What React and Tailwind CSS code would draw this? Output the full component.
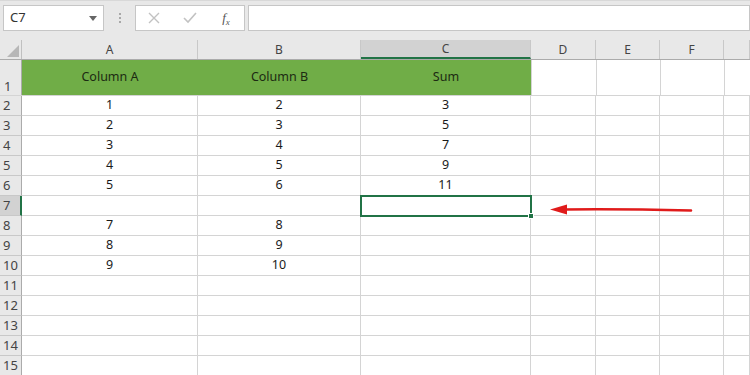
import { useState } from "react";

const cols = [
  { key: "A", w: "w-[176px]" },
  { key: "B", w: "w-[163px]" },
  { key: "C", w: "w-[170px]" },
  { key: "D", w: "w-[65px]" },
  { key: "E", w: "w-[64px]" },
  { key: "F", w: "w-[64px]" },
  { key: "G", w: "flex-1" },
];

// sheet contents, row 1 is the green title row
const data = {
  2: ["1", "2", "3"],
  3: ["2", "3", "5"],
  4: ["3", "4", "7"],
  5: ["4", "5", "9"],
  6: ["5", "6", "11"],
  7: ["", "", ""],
  8: ["7", "8", ""],
  9: ["8", "9", ""],
  10: ["9", "10", ""],
};

const rows = [2, 3, 4, 5, 6, 7, 8, 9, 10, 11, 12, 13, 14, 15];

const Toolbar = () => (
  <div className="h-[40px] bg-[#e8e8e8] border-t border-[#d8d8d8] flex items-start pt-[4px] pl-[3px] gap-0">
    {/* Name box */}
    <div className="w-[101px] h-[26px] bg-white border border-[#c6c6c6] flex items-center justify-between pl-[6px] pr-[6px]">
      <span className="text-[13px] text-[#333]">C7</span>
      <svg width="8" height="5" viewBox="0 0 8 5">
        <path d="M0 0 L8 0 L4 5 Z" fill="#666" />
      </svg>
    </div>
    <div className="w-[31px] h-[26px] flex items-center justify-center">
      <div className="flex flex-col gap-[2px]">
        <span className="w-[2px] h-[2px] bg-[#a8a8a8]" />
        <span className="w-[2px] h-[2px] bg-[#a8a8a8]" />
        <span className="w-[2px] h-[2px] bg-[#a8a8a8]" />
      </div>
    </div>
    {/* cancel / enter / fx */}
    <div className="w-[110px] h-[26px] bg-white border border-[#c6c6c6] flex items-center">
      <div className="w-[36px] flex justify-center">
        <svg width="12" height="12" viewBox="0 0 12 12">
          <path d="M1 1 L11 11 M11 1 L1 11" stroke="#c2c2c2" strokeWidth="1.4" />
        </svg>
      </div>
      <div className="w-[36px] flex justify-center">
        <svg width="14" height="12" viewBox="0 0 14 12">
          <path d="M1 6 L5 10 L13 1" stroke="#c2c2c2" strokeWidth="1.6" fill="none" />
        </svg>
      </div>
      <div className="w-[36px] flex justify-center">
        <span className="text-[13px] italic text-[#555] font-['Liberation_Serif',serif]">
          f<sub className="text-[9px]">x</sub>
        </span>
      </div>
    </div>
    <div className="ml-[3px] flex-1 h-[26px] bg-white border border-[#c6c6c6]" />
  </div>
);

const App = () => {
  const [selected] = useState("C7");

  return (
    <div className="w-[750px] h-[375px] overflow-hidden bg-white font-['Noto_Sans','Open_Sans',sans-serif] text-[#1a1a1a] relative">
      <Toolbar />

      {/* column headers */}
      <div className="flex h-[20px] bg-[#e8e8e8] border-b border-[#ababab]">
        <div className="w-[22px] shrink-0 border-r border-[#c0c0c0] flex items-end justify-end p-[2px]">
          <svg width="12" height="12" viewBox="0 0 12 12">
            <path d="M12 0 L12 12 L0 12 Z" fill="#b7b7b7" />
          </svg>
        </div>
        {cols.map((c) => (
          <div
            key={c.key}
            className={`${c.w} shrink-0 flex items-center justify-center text-[12px] text-[#444] border-r border-[#c8c8c8] ${
              c.key === "C" ? "bg-[#d2d2d2] border-b-2 border-b-[#217346]" : ""
            }`}
          >
            {c.key !== "G" ? c.key : ""}
          </div>
        ))}
      </div>

      {/* row 1 */}
      <div className="flex h-[36px] border-b border-[#d4d4d4]">
        <div className="w-[22px] shrink-0 bg-[#e8e8e8] border-r border-[#ababab] flex items-end pl-[4px] text-[13px] text-[#444] leading-[18px]">
          1
        </div>
        <div className="w-[509px] shrink-0 bg-[#70ad47] flex text-[12.5px] text-[#1c2a12]">
          <div className="w-[176px] flex items-center justify-center">Column A</div>
          <div className="w-[163px] flex items-center justify-center">Column B</div>
          <div className="w-[170px] flex items-center justify-center">Sum</div>
        </div>
        {cols.slice(3).map((c) => (
          <div key={c.key} className={`${c.w} shrink-0 border-l border-[#d4d4d4]`} />
        ))}
      </div>

      {/* rows 2..15 */}
      {rows.map((r) => {
        const vals = data[r] || ["", "", ""];
        const active = r === 7;
        return (
          <div key={r} className="flex h-[20px]">
            <div
              className={`w-[22px] shrink-0 border-b border-[#c8c8c8] text-[13px] text-[#444] flex items-center pl-[3px] ${
                active
                  ? "bg-[#d2d2d2] border-r-2 border-r-[#217346]"
                  : "bg-[#e8e8e8] border-r border-r-[#ababab]"
              }`}
            >
              {r}
            </div>
            {cols.map((c, i) => (
              <div
                key={c.key}
                className={`${c.w} shrink-0 border-r border-b border-[#d4d4d4] flex items-center justify-center text-[12.5px]`}
              >
                {i < 3 ? vals[i] : ""}
              </div>
            ))}
          </div>
        );
      })}

      {/* active cell outline for C7 */}
      {selected === "C7" && (
        <div className="absolute left-[360px] top-[195px] w-[172px] h-[22px] border-2 border-[#217346] pointer-events-none">
          <div className="absolute -right-[4px] -bottom-[4px] w-[6px] h-[6px] bg-[#217346] border border-white" />
        </div>
      )}

      {/* red annotation arrow */}
      <svg className="absolute left-[548px] top-[200px]" width="146" height="20" viewBox="0 0 146 20">
        <path d="M16 9.5 C60 9, 100 9.5, 143 10.5" stroke="#e01b1b" strokeWidth="2.6" fill="none" strokeLinecap="round" />
        <path d="M2 9.5 L19 4.5 L19 14.5 Z" fill="#e01b1b" />
      </svg>
    </div>
  );
};

export default App;
